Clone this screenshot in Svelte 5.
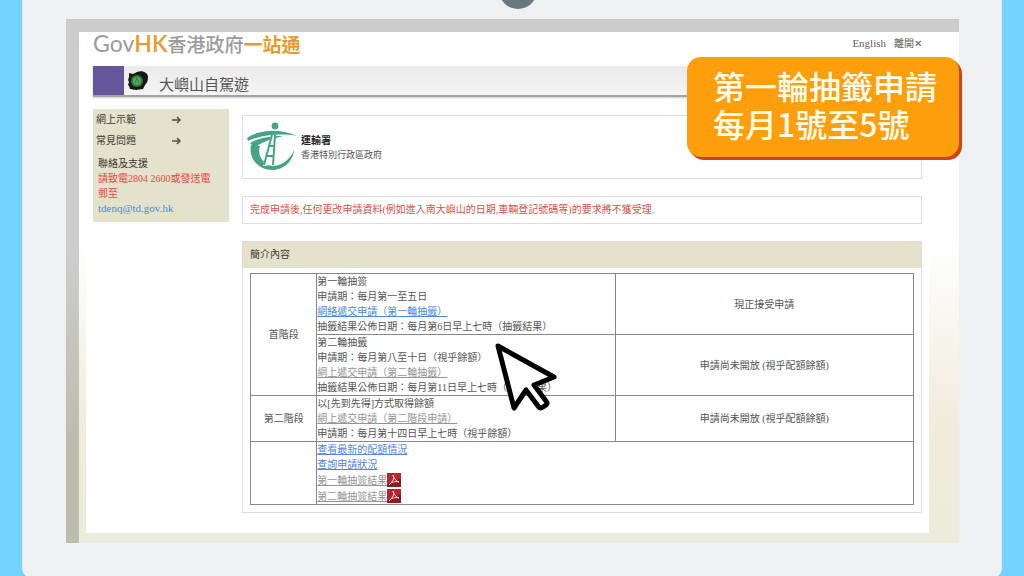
<script lang="ts">
	const guides = ['網上示範', '常見問題'];

	const rounds = [
		{
			stage: '首階段',
			span: 2,
			title: '第一輪抽簽',
			period: '申請期：每月第一至五日',
			link: '網絡遞交申請（第一輪抽籤）',
			open: true,
			result: '抽籤結果公佈日期：每月第6日早上七時（抽籤結果）',
			status: '現正接受申請'
		},
		{
			title: '第二輪抽籤',
			period: '申請期：每月第八至十日（視乎餘額）',
			link: '網上遞交申請（第二輪抽籤）',
			open: false,
			result: '抽籤結果公佈日期：每月第11日早上七時（抽籤結果）',
			status: '申請尚未開放 (視乎配額餘額)'
		}
	];

	const queries = ['查看最新的配額情況', '查詢申請狀況'];
	const results = ['第一輪抽簽結果', '第二輪抽簽結果'];
</script>

<div class="stage">
	<div class="tablet">
		<span class="camera"></span>
		<div class="screen">
			<div class="page">
				<div class="sheet">
					<header class="top">
						<a href="#home" class="logo">
							<span class="logo__gov">Gov</span><span class="logo__hk">HK</span><span class="logo__name">香港政府</span><span class="logo__portal">一站通</span>
						</a>
						<nav class="top__links">
							<a href="#en" class="top__english">English</a>
							<a href="#leave">離開✕</a>
						</nav>
					</header>

					<div class="banner">
						<span class="banner__block"></span>
						<svg class="banner__light" viewBox="0 0 22 22" aria-hidden="true">
							<path d="M2 3l4 1 4-2c6-2 11 1 11 5 0 4-1 6-3 8l-2 4-7 1-6-1-1-3-1-1 1-3-1-2 1-3z" fill="#151a14" />
							<circle cx="10" cy="11" r="6" fill="#2c7a3b" />
							<circle cx="10" cy="11" r="4" fill="#55a862" />
							<path d="M8 13l2-5 2 5" fill="none" stroke="#2f8040" stroke-width="1" />
						</svg>
						<h1>大嶼山自駕遊</h1>
					</div>

					<div class="columns">
						<aside class="side">
							{#each guides as guide}
								<a href="#guide" class="side__link">
									<span>{guide}</span>
									<svg viewBox="0 0 10 8" aria-hidden="true">
										<path d="M0 4h8M5 1l3 3-3 3" fill="none" stroke="#55534a" stroke-width="1.5" />
									</svg>
								</a>
							{/each}
							<div class="side__contact">
								<p>聯絡及支援</p>
								<p class="side__phone">請致電2804 2600或發送電郵至</p>
								<a href="mailto:tdenq@td.gov.hk">tdenq@td.gov.hk</a>
							</div>
						</aside>

						<main class="main">
							<div class="box department">
								<svg viewBox="0 0 50 50" aria-hidden="true">
									<g fill="#45a486">
										<circle cx="28" cy="4" r="3.4" />
										<path d="M0 16C10 9 30 5 50 14 34 11 14 13 1 19z" />
										<path d="M3 21C12 16 22 14 36 14 24 17 12 21 8 26z" />
										<path d="M4 23C1 37 12 48 25 48 37 48 46 39 47 28 42 40 33 44 25 44 16 42 10 34 13 24z" />
									</g>
									<path d="M24 13L16 44 25 43 28 13z" fill="#fff" />
									<path d="M25 13L17 43M28 13L26 43M22 24h5M20 34h6" fill="none" stroke="#45a486" stroke-width="2" />
								</svg>
								<div>
									<strong>運輸署</strong>
									<span>香港特別行政區政府</span>
								</div>
							</div>

							<p class="box notice">完成申請後,任何更改申請資料(例如進入南大嶼山的日期,車輛登記號碼等)的要求將不獲受理.</p>

							<section class="panel">
								<h2>簡介內容</h2>
								<table>
									<colgroup>
										<col class="col-stage" />
										<col />
										<col />
									</colgroup>
									<tbody>
										{#each rounds as round}
											<tr>
												{#if round.stage}
													<th rowspan={round.span}>{round.stage}</th>
												{/if}
												<td>
													{round.title}<br />
													{round.period}<br />
													<a href="#apply" class:closed={!round.open}>{round.link}</a><br />
													{round.result}
												</td>
												<td class="status">{round.status}</td>
											</tr>
										{/each}
										<tr>
											<th>第二階段</th>
											<td>
												以[先到先得]方式取得餘額<br />
												<a href="#apply" class="closed">網上遞交申請（第二階段申請）</a><br />
												申請期：每月第十四日早上七時（視乎餘額）
											</td>
											<td class="status">申請尚未開放 (視乎配額餘額)</td>
										</tr>
										<tr>
											<th></th>
											<td colspan="2">
												{#each queries as query}
													<div><a href="#query">{query}</a></div>
												{/each}
												{#each results as result}
													<div class="file">
														<a href="#pdf" class="closed">{result}</a>
														<svg viewBox="0 0 14 14" aria-hidden="true">
															<rect width="14" height="14" fill="#8f1a20" />
															<path d="M0 0h14v5L0 11z" fill="#b3262b" />
															<path d="M6 2c2 3 0 6-4 10 2-3 6-4 10-3-3-1-5-3-6-7z" fill="none" stroke="#f3dede" stroke-width="1" />
														</svg>
													</div>
												{/each}
											</td>
										</tr>
									</tbody>
								</table>
							</section>
						</main>
					</div>
				</div>
			</div>
		</div>

		<div class="callout">第一輪抽籤申請<br />每月1號至5號</div>

		<svg class="cursor" viewBox="0 0 66 72" aria-hidden="true">
			<path d="M5 5L61 36 41 44 53 60Q55 62 53 64L50 66Q47 68 45 65L33 49 21 67z" fill="#fff" stroke="#000" stroke-width="5" stroke-linejoin="round" />
		</svg>
	</div>
</div>

<style>
	:global(body) {
		background: #74d3ff;
	}

	.stage {
		height: 100vh;
		overflow: hidden;
		padding: 0 22px;
		box-sizing: border-box;
		font-family: 'Liberation Serif', 'Noto Sans CJK TC', serif;
		font-size: 10px;
		line-height: 15px;
		color: #555555;
	}

	.tablet {
		position: relative;
		padding: 19px 43px 35px 44px;
		background: #eef0f2;
		border-radius: 0 0 10px 10px;
	}

	.camera {
		position: absolute;
		top: -29px;
		left: 50%;
		width: 38px;
		height: 38px;
		margin-left: -13px;
		border-radius: 50%;
		background: #68797d;
	}

	.screen {
		padding: 13px 0 0 13px;
		background: linear-gradient(#cccccc 45%, #bdbdae 80%);
	}

	.page {
		padding: 0 30px 10px 7px;
		background: linear-gradient(#ffffff 40%, #efecdc 78%, #ebecdd);
	}

	.sheet {
		padding: 0 7px 20px;
		background: #ffffff;
	}

	a {
		color: #4f86e8;
	}

	p,
	h1,
	h2 {
		margin: 0;
		font-weight: normal;
	}

	.top {
		display: flex;
		justify-content: space-between;
		height: 34px;
	}

	.logo {
		display: flex;
		align-items: baseline;
		font-family: Lato, 'Noto Sans CJK TC', sans-serif;
		font-size: 19px;
		line-height: 22px;
		color: #9b9b9b;
		text-decoration: none;
	}

	.logo__gov,
	.logo__hk {
		font-size: 23px;
	}

	.logo__hk,
	.logo__portal {
		color: #ea9a2d;
	}

	.logo__hk {
		font-weight: 600;
	}

	.logo__name {
		font-weight: 500;
	}

	.logo__portal {
		font-weight: bold;
	}

	.top__links {
		display: flex;
		gap: 8px;
		padding-top: 4px;
	}

	.top__links a {
		color: #666060;
		text-decoration: none;
	}

	.top__links .top__english {
		font-size: 11px;
	}

	.banner {
		display: flex;
		align-items: center;
		background: linear-gradient(#eaeaea, #f5f5f5);
		border-bottom: 2px solid #a3a3a3;
		box-shadow: 0 1px 2px #cccccc;
	}

	.banner__block {
		width: 31px;
		height: 29px;
		background: #63569a;
	}

	.banner__light {
		width: 22px;
		height: 22px;
		margin: 0 10px 0 3px;
	}

	.banner h1 {
		padding-top: 10px;
		font-size: 15px;
		line-height: 19px;
		color: #555555;
	}

	.columns {
		display: flex;
		align-items: flex-start;
		gap: 13px;
		padding-top: 12px;
	}

	.side {
		box-sizing: border-box;
		width: 136px;
		padding: 3px 3px 6px;
		background: #e4e2cd;
		color: #3c3a30;
	}

	.side__link {
		display: flex;
		align-items: center;
		gap: 36px;
		height: 15px;
		margin-bottom: 6px;
		color: #3c3a30;
		text-decoration: none;
	}

	.side__link svg {
		width: 10px;
		height: 8px;
	}

	.side__contact {
		padding: 2px 10px 0 2px;
	}

	.side__contact a {
		font-size: 11px;
		text-decoration: none;
	}

	.side__phone {
		color: #e8463c;
	}

	.main {
		flex: 1;
		padding-top: 6px;
	}

	.box {
		box-sizing: border-box;
		border: 1px solid #dddddd;
	}

	.department {
		display: flex;
		align-items: center;
		gap: 4px;
		height: 64px;
		padding: 0 4px;
	}

	.department svg {
		width: 50px;
		height: 50px;
	}

	.department strong,
	.department span {
		display: block;
		font-family: 'Noto Sans CJK TC', sans-serif;
		font-size: 10px;
	}

	.department span {
		font-size: 9px;
	}

	.department strong {
		color: #222222;
	}

	.notice {
		margin: 17px 0;
		padding: 5px 7px 6px;
		color: #d9534a;
	}

	.panel {
		padding-bottom: 7px;
		border: 1px solid #dddddd;
	}

	.panel h2 {
		padding: 5px 7px 6px;
		background: #e4e2cd;
		font-size: 10px;
		color: #3c3a30;
	}

	table {
		width: calc(100% - 14px);
		margin: 5px 7px 0;
		border-collapse: collapse;
		table-layout: fixed;
	}

	.col-stage {
		width: 10%;
	}

	th,
	td {
		padding: 0;
		border: 1px solid #888888;
		font-weight: normal;
		white-space: nowrap;
	}

	.status {
		text-align: center;
	}

	.closed {
		color: #959595;
	}

	.file {
		display: flex;
		align-items: center;
		height: 16px;
	}

	.file svg {
		width: 14px;
		height: 14px;
	}

	.callout {
		position: absolute;
		top: 57px;
		right: 43px;
		box-sizing: border-box;
		width: 272px;
		padding: 9px 0 15px 26px;
		border-radius: 14px;
		background: #fd9f0d;
		box-shadow: 1px 1px #cf4314, 2px 2px #cf4314, 3px 3px #cf4314;
		font-family: 'Noto Sans CJK TC', sans-serif;
		font-size: 32px;
		font-weight: 500;
		line-height: 38px;
		color: #fffdf0;
		white-space: nowrap;
	}

	.cursor {
		position: absolute;
		top: 341px;
		left: 471px;
		width: 66px;
		height: 72px;
	}
</style>
